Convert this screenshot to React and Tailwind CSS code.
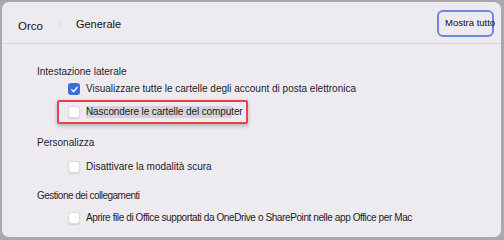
import React from 'react';

function Checkbox({ checked }) {
  if (checked) {
    return (
      <span className="flex h-[12px] w-[12px] shrink-0 items-center justify-center rounded-[3px] bg-[#3b6fd8]">
        <svg width="9" height="9" viewBox="0 0 10 10" fill="none">
          <path d="M2 5.3 L4.1 7.4 L8 2.6" stroke="white" strokeWidth="1.6" strokeLinecap="round" strokeLinejoin="round" />
        </svg>
      </span>
    );
  }
  return (
    <span className="h-[12px] w-[12px] shrink-0 rounded-[3px] border border-[#dcdadf] bg-white shadow-[0_0.5px_1px_rgba(0,0,0,0.12)]"></span>
  );
}

function Row({ checked, children, className = '', textClass = '' }) {
  return (
    <div className={`flex h-[22px] items-center gap-[6px] pl-[31px] ${className}`}>
      <Checkbox checked={checked} />
      <span className={`whitespace-nowrap text-[10px] leading-[12px] text-[#1c1c1e] ${textClass}`}>{children}</span>
    </div>
  );
}

function Title({ children, className = '' }) {
  return (
    <div className={`flex h-[14px] items-center whitespace-nowrap text-[10px] text-[#26262a] ${className}`}>
      {children}
    </div>
  );
}

export default function App() {
  return (
    <div
      className="h-[240px] w-[504px] bg-[#a9a9ab] pb-[3px] pl-[2px] pr-[3px] pt-[2px]"
      style={{ fontFamily: '"Liberation Sans", Arial, sans-serif' }}
    >
      <div className="flex h-full flex-col overflow-hidden rounded-[7px] bg-[#edebf0]">
        {/* Header */}
        <div className="flex h-[42px] shrink-0 items-center border-b border-[#d6d4d9] pl-[16px] pr-[7px]">
          <span className="mt-[9px] text-[11.5px] text-[#111]">Orco</span>
          <span className="ml-[16px] mt-[2px] h-[6px] w-px bg-[#dad8dd]"></span>
          <span className="ml-[16px] mt-[4px] text-[11px] text-[#111]">Generale</span>
          <div className="ml-auto mt-[2px] flex h-[27px] w-[57px] items-center rounded-[6px] border-2 border-[#7186e0] pl-[6px]">
            <span className="whitespace-nowrap text-[9.5px] text-[#111]">Mostra tutto</span>
          </div>
        </div>

        {/* Content */}
        <div className="flex flex-col pl-[35px]">
          <Title className="mt-[20px]">Intestazione laterale</Title>
          <Row checked className="h-[21px]">Visualizzare tutte le cartelle degli account di posta elettronica</Row>
          <div className="ml-[20px] flex h-[24px] w-[191px] items-center gap-[6px] rounded-[2px] border-2 border-[#e8434c] pl-[9px] shadow-[0_2px_4px_rgba(0,0,0,0.25)]">
            <Checkbox />
            <span className="inline-block w-[146px] whitespace-nowrap bg-[#d5d3d8] text-[10px] leading-[12px] tracking-[-0.1px] text-[#1c1c1e]">
              Nascondere le cartelle del computer
            </span>
          </div>

          <Title className="mt-[11px]">Personalizza</Title>
          <Row className="mt-[7px]">Disattivare la modalità scura</Row>

          <Title className="mt-[10px] tracking-[-0.5px]">Gestione dei collegamenti</Title>
          <Row className="mt-[5px]" textClass="tracking-[-0.4px]">
            Aprire file di Office supportati da OneDrive o SharePoint nelle app Office per Mac
          </Row>
        </div>
      </div>
    </div>
  );
}
